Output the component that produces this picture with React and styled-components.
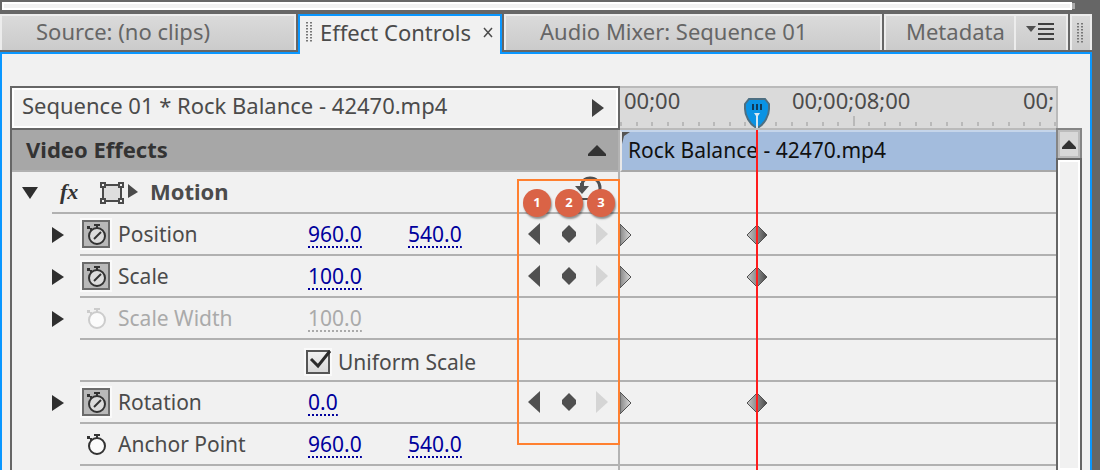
import React from 'react';
import styled, { createGlobalStyle } from 'styled-components';

const GlobalStyle = createGlobalStyle`
  * {
    box-sizing: border-box;
  }
  body {
    margin: 0;
    background: #666;
    color: #4b4b4b;
    font-family: 'Noto Sans', 'Open Sans', sans-serif;
    font-size: 21px;
    overflow: hidden;
  }
  button {
    padding: 0;
    border: none;
    background: none;
    color: inherit;
    font: inherit;
    cursor: pointer;
  }
  svg {
    display: block;
    flex: none;
  }
`;

const Workspace = styled.main`
  display: flex;
  flex-direction: column;
  min-height: 100vh;
  padding-right: 8px;
`;

const UpperPanel = styled.div`
  height: 8px;
  margin: 2px 20px 4px 2px;
  border: 2px solid #fff;
  background: #f1f1f1;
  box-shadow: 4px 0 0 -1px #aaa;
`;

const TabBar = styled.nav`
  display: grid;
  grid-template-columns: 298fr 204fr 382fr 186fr 22fr;
  height: 38px;
  font-size: 22px;
`;

const Tab = styled.button`
  display: flex;
  align-items: center;
  height: 36px;
  margin-right: ${(p) => (p.$joined ? 0 : 2)}px;
  margin-left: ${(p) => (p.$gap ? 2 : 0)}px;
  padding: 0 0 4px ${(p) => p.$indent}px;
  border: 2px solid #ececec;
  border-bottom: none;
  background: linear-gradient(#dadada, #cbcbcb);
  color: #666;
  text-align: left;
  white-space: nowrap;
`;

const MenuButton = styled(Tab)`
  border-left: none;
`;

const ActiveTab = styled.div`
  display: flex;
  align-items: center;
  height: 40px;
  padding: 0 6px 6px;
  border: 2px solid #0a97ff;
  border-bottom: none;
  background: #f1f1f1;
  position: relative;
  z-index: 1;
  white-space: nowrap;

  button:first-of-type {
    margin: 0 12px 0 6px;
  }
`;

const TabGroup = styled.div`
  display: grid;
  grid-template-columns: 1fr 54px;
`;

const Grip = styled.div`
  display: flex;
  align-items: center;
  justify-content: center;
  height: 36px;
  border: 2px solid #ececec;
  border-bottom: none;
  background: linear-gradient(#dadada, #cbcbcb);
`;

const Panel = styled.section`
  display: grid;
  grid-template-columns: 610px 1fr 24px;
  flex: 1;
  padding: 32px 8px 0;
  border: 2px solid #0a97ff;
  border-bottom: none;
  background: #f1f1f1;
`;

const Properties = styled.div`
  position: relative;
`;

const ClipHeader = styled.header`
  display: flex;
  justify-content: space-between;
  align-items: center;
  height: 44px;
  padding: 0 14px 0 10px;
  border: 2px solid #666;
  box-shadow: inset 0 0 0 2px #fff;
  font-size: 22px;

  span {
    padding-bottom: 6px;
  }
`;

const PropertyList = styled.div`
  height: calc(100% - 44px);
  border-left: 2px solid #666;
  border-right: 2px solid #b3b3b3;
`;

const GroupBar = styled.div`
  display: flex;
  justify-content: space-between;
  align-items: center;
  height: 42px;
  padding: 0 12px 0 14px;
  border-bottom: 2px solid #b1b1b1;
  background: #a7a7a7;
  color: #333;
  font-size: 22px;
  font-weight: bold;

  span {
    padding-bottom: 2px;
  }
`;

const Row = styled.div`
  display: grid;
  grid-template-columns: ${(p) => (p.$effect ? 40 : 68)}px 1fr;
  height: 42px;
  color: ${(p) => (p.$disabled ? '#aaa' : '#4b4b4b')};
`;

const ToggleCell = styled.div`
  display: flex;
  align-items: center;
  padding-left: ${(p) => (p.$effect ? 10 : 40)}px;
`;

const EffectCells = styled.div`
  display: flex;
  align-items: center;
  gap: 12px;
  padding: 0 16px 0 8px;
  border-bottom: 2px solid #b1b1b1;
  font-size: 22px;
  font-weight: bold;

  > span {
    padding-bottom: 2px;
  }
  > button:last-child {
    align-self: flex-start;
    margin: 4px 0 0 auto;
  }
`;

const FxButton = styled.button`
  width: 28px;
  color: #333;
  font-family: 'Liberation Serif', serif;
  font-style: italic;
  font-size: 22px;
  line-height: 36px;
  text-align: left;
`;

const ParamCells = styled.div`
  display: grid;
  grid-template-columns: 38px 190px 100px 120px 1fr;
  align-items: center;
  border-bottom: 2px solid #b1b1b1;
  white-space: nowrap;
`;

const WatchButton = styled.button`
  width: 28px;
  height: 28px;
  margin-left: 2px;
  border: 2px solid ${(p) => (p.$on ? '#6b6b6b' : 'transparent')};
  background: ${(p) => (p.$on ? '#b9b9b9' : 'none')};
  box-shadow: ${(p) => (p.$on ? '0 0 0 2px #fafafa' : 'none')};
  color: ${(p) => (p.disabled ? '#ccc' : '#333')};
`;

const Value = styled.button`
  justify-self: start;
  height: 28px;
  color: ${(p) => (p.disabled ? '#aaa' : '#00009c')};
  line-height: 28px;
  background: repeating-linear-gradient(90deg, currentColor 0 2px, transparent 2px 4px) bottom / 100% 2px no-repeat;
`;

const KeyNav = styled.div`
  display: grid;
  grid-template-columns: repeat(3, 34px);
`;

const CheckLabel = styled.label`
  display: flex;
  align-items: center;
  grid-column: 2 / -1;
  gap: 8px;
  padding: 4px 0 0 188px;

  input {
    appearance: none;
    width: 24px;
    height: 24px;
    margin: 0;
    border: 2px solid #555;
    background: linear-gradient(#f1f1f1, #d8d8d8);
    box-shadow: 0 0 0 2px #fafafa;
  }
`;

const CheckBox = styled.span`
  position: relative;

  input {
    display: block;
  }
  svg {
    position: absolute;
    inset: 0;
    pointer-events: none;
  }
  input:not(:checked) + svg {
    display: none;
  }
`;

const Highlight = styled.div`
  position: absolute;
  top: 93px;
  right: 0;
  width: 103px;
  height: 266px;
  padding: 8px 0 0 4px;
  border: 2px solid #ff8030;
  display: flex;
  gap: 4px;
  pointer-events: none;
`;

const Badge = styled.span`
  flex: none;
  width: 28px;
  height: 28px;
  border-radius: 50%;
  background: #da6346;
  box-shadow: 1px 2px 2px rgba(0, 0, 0, 0.4);
  color: #fff;
  font: bold 13px/26px 'Open Sans', sans-serif;
  text-align: center;
`;

const Timeline = styled.div`
  position: relative;
  min-width: 0;
  overflow: hidden;
`;

const Ruler = styled.div`
  height: 44px;
  border: 2px solid #bababa;
  border-left: none;
  background: #dadada;
  overflow: hidden;
`;

const RulerTimes = styled.div`
  display: grid;
  grid-template-columns: 168px 231px 1fr;
  padding-left: 4px;
  font-size: 22px;
  line-height: 24px;
  white-space: nowrap;
`;

const ClipBar = styled.div`
  display: flex;
  height: 42px;
  margin-right: 2px;
  border-top: 2px solid #c5d5ea;
  border-bottom: 2px solid #a8a8a8;
  border-left: 2px solid #e8e8e8;
  background: #a3bcdd;
  color: #111;
  line-height: 36px;
  white-space: nowrap;

  span {
    margin-left: -2px;
  }
`;

const Track = styled.div`
  position: relative;
  height: 42px;
  margin-right: 2px;
  border-bottom: 2px solid #b1b1b1;
`;

const Keyframe = styled.button`
  position: absolute;
  top: 10px;
  left: ${(p) => p.$at}px;
`;

const Playhead = styled.div`
  position: absolute;
  top: 12px;
  bottom: 0;
  left: 124px;
  width: 26px;

  &::after {
    content: '';
    position: absolute;
    top: 32px;
    bottom: 0;
    left: 12px;
    width: 2px;
    background: #ff1c1c;
  }
`;

const Scrollbar = styled.div`
  display: flex;
  flex-direction: column;
  margin: 42px 0 0 -2px;
  position: relative;

  button:first-child {
    display: flex;
    align-items: center;
    justify-content: center;
    height: 30px;
    border: 2px solid #858585;
    border-bottom: none;
    background: #d8d8d8;
    box-shadow: inset 0 0 0 2px #bcbcbc;
  }
  button:last-child {
    flex: 1;
    border: 2px solid #666;
    border-bottom: none;
    box-shadow: inset 0 0 0 2px #fff;
  }
`;

const PARAMS = [
  { name: 'Position', values: ['960.0', '540.0'], open: true, keyed: true },
  { name: 'Scale', values: ['100.0'], open: true, keyed: true },
  { name: 'Scale Width', values: ['100.0'], open: true, disabled: true },
  { name: 'Uniform Scale', check: true },
  { name: 'Rotation', values: ['0.0'], open: true, keyed: true },
  { name: 'Anchor Point', values: ['960.0', '540.0'] },
];

const TICKS = Array.from({ length: 29 }, (_, i) => Math.round(i * 15.5));

const GripDots = () => (
  <svg width="8" height="20" fill="#777">
    {[0, 3, 6, 9, 12, 15, 18].map((y) => (
      <g key={y}>
        <rect x="0" y={y} width="2" height="1.5" />
        <rect x="4" y={y} width="2" height="1.5" />
      </g>
    ))}
  </svg>
);

const RightArrow = ({ height = 16, color = '#2f2f2f' }) => (
  <svg width="12" height={height} viewBox="0 0 12 16" preserveAspectRatio="none">
    <path d="M0 0 12 8 0 16Z" fill={color} />
  </svg>
);

const UpArrow = ({ width = 18, height = 11 }) => (
  <svg width={width} height={height} viewBox="0 0 18 11" preserveAspectRatio="none">
    <path d="M9 0 18 9V11H0V9Z" fill="#333" />
  </svg>
);

const Stopwatch = ({ on }) => (
  <svg width="24" height="24" viewBox="0 0 24 24" fill="none" stroke="currentColor" strokeWidth="2">
    <circle cx="13" cy="14" r="8" fill="#fff" fillOpacity={on ? 0.5 : 0.7} />
    <path d="M10 3H16M13 3V6" />
    <path d="M3 4H6V6H8V9H6V7H3Z" fill="currentColor" stroke="none" />
    {on && <path d="M10 17 17 10" />}
  </svg>
);

const TransformIcon = () => (
  <svg width="38" height="24" viewBox="0 0 38 24" fill="#f1f1f1" stroke="#4b4b4b" strokeWidth="2">
    <rect x="3" y="5" width="18" height="16" fill="#dedede" />
    <rect x="1" y="3" width="4" height="4" />
    <rect x="19" y="3" width="4" height="4" />
    <rect x="1" y="19" width="4" height="4" />
    <rect x="19" y="19" width="4" height="4" />
    <path d="M28 4V18L38 12Z" fill="#4b4b4b" stroke="none" />
  </svg>
);

const ResetIcon = () => (
  <svg width="28" height="26" viewBox="0 0 28 26" fill="none" stroke="#505050" strokeWidth="3">
    <path d="M8 8C9 4 12 2 16 2C22 2 26 6 26 12C26 18 23 22 18 23" />
    <path d="M6 7H10V10H15L8 18 1 10H6Z" fill="#505050" stroke="none" />
    <path d="M7 23H20" strokeWidth="2" />
  </svg>
);

const KeyNavigator = () => (
  <KeyNav>
    <button aria-label="Previous keyframe">
      <svg width="12" height="22">
        <path d="M12 0V22L0 11Z" fill="#505050" />
      </svg>
    </button>
    <button aria-label="Add or remove keyframe">
      <svg width="14" height="22">
        <path d="M7 2 14 9V13L7 20 0 13V9Z" fill="#505050" />
      </svg>
    </button>
    <button aria-label="Next keyframe">
      <RightArrow height={22} color="#d5d5d5" />
    </button>
  </KeyNav>
);

const Param = ({ name, values, open, keyed, disabled, check }) => (
  <Row $disabled={disabled}>
    <ToggleCell>
      {open && (
        <button aria-label={`Expand ${name}`}>
          <RightArrow />
        </button>
      )}
    </ToggleCell>
    <ParamCells>
      {check ? (
        <CheckLabel>
          <CheckBox>
            <input type="checkbox" defaultChecked />
            <svg width="26" height="24" fill="none" stroke="#2b2b2b" strokeWidth="3">
              <path d="M5 9 12 16 24 1" />
            </svg>
          </CheckBox>
          {name}
        </CheckLabel>
      ) : (
        <>
          <WatchButton $on={keyed} disabled={disabled} aria-label={`Toggle ${name} animation`}>
            <Stopwatch on={keyed} />
          </WatchButton>
          <span>{name}</span>
          <Value disabled={disabled}>{values[0]}</Value>
          {values[1] ? <Value>{values[1]}</Value> : <span />}
          {keyed && <KeyNavigator />}
        </>
      )}
    </ParamCells>
  </Row>
);

const App = () => {
  return (
    <>
      <GlobalStyle />
      <Workspace>
        <UpperPanel />
        <TabBar>
          <Tab $indent={34}>Source: (no clips)</Tab>
          <ActiveTab>
            <GripDots />
            <button>Effect Controls</button>
            <button aria-label="Close tab">
              <svg width="10" height="12" stroke="#4b4b4b" strokeWidth="1.5">
                <path d="M1 2 9 11M9 2 1 11" />
              </svg>
            </button>
          </ActiveTab>
          <Tab $indent={34} $gap>
            Audio Mixer: Sequence 01
          </Tab>
          <TabGroup>
            <Tab $indent={20} $joined>
              Metadata
            </Tab>
            <MenuButton $indent={10} aria-label="Panel menu">
              <svg width="30" height="18">
                <path d="M0 4H10L5 10Z" fill="#505050" />
                <path d="M12 2H28M12 7H28M12 12H28M12 17H28" stroke="#404040" strokeWidth="2" />
              </svg>
            </MenuButton>
          </TabGroup>
          <Grip>
            <GripDots />
          </Grip>
        </TabBar>

        <Panel>
          <Properties>
            <ClipHeader>
              <span>Sequence 01 * Rock Balance - 42470.mp4</span>
              <button aria-label="Show timeline view">
                <RightArrow height={18} color="#404040" />
              </button>
            </ClipHeader>
            <PropertyList>
              <GroupBar>
                <span>Video Effects</span>
                <button aria-label="Collapse video effects">
                  <UpArrow />
                </button>
              </GroupBar>
              <Row $effect>
                <ToggleCell $effect>
                  <button aria-label="Collapse Motion">
                    <svg width="16" height="12">
                      <path d="M0 0H16L8 12Z" fill="#2f2f2f" />
                    </svg>
                  </button>
                </ToggleCell>
                <EffectCells>
                  <FxButton>fx</FxButton>
                  <TransformIcon />
                  <span>Motion</span>
                  <button aria-label="Reset Motion">
                    <ResetIcon />
                  </button>
                </EffectCells>
              </Row>
              {PARAMS.map((param) => (
                <Param key={param.name} {...param} />
              ))}
            </PropertyList>
            <Highlight>
              <Badge>1</Badge>
              <Badge>2</Badge>
              <Badge>3</Badge>
            </Highlight>
          </Properties>

          <Timeline>
            <Ruler>
              <RulerTimes>
                <span>00;00</span>
                <span>00;00;08;00</span>
                <span>00;</span>
              </RulerTimes>
              <svg width="100%" height="16" fill="#b9b9b9">
                {TICKS.map((x, i) => (
                  <rect key={x} x={x} y={i === 15 ? 4 : 10} width="2" height={i === 15 ? 10 : 4} />
                ))}
              </svg>
            </Ruler>
            <ClipBar>
              <svg width="8" height="12">
                <path d="M0 0H8L2 4 0 12Z" fill="#555" />
              </svg>
              <span>Rock Balance - 42470.mp4</span>
            </ClipBar>
            <Track />
            {PARAMS.map(({ name, keyed }) => (
              <Track key={name}>
                {keyed && (
                  <>
                    <Keyframe $at={0} aria-label={`${name} start keyframe`}>
                      <svg width="12" height="22">
                        <path d="M0 0 11 11 0 22Z" fill="url(#key-start)" stroke="#505050" />
                      </svg>
                    </Keyframe>
                    <Keyframe $at={126} aria-label={`${name} keyframe`}>
                      <svg width="22" height="22">
                        <path d="M11 1 21 11 11 21 1 11Z" fill="url(#key-end)" stroke="#505050" />
                      </svg>
                    </Keyframe>
                  </>
                )}
              </Track>
            ))}
            <Playhead>
              <svg width="26" height="32">
                <defs>
                  <linearGradient id="key-start">
                    <stop offset="0" stopColor="#888" />
                    <stop offset="1" stopColor="#ddd" />
                  </linearGradient>
                  <linearGradient id="key-end">
                    <stop offset="0" stopColor="#c8c8c8" />
                    <stop offset="1" stopColor="#484848" />
                  </linearGradient>
                </defs>
                <path
                  d="M5 1H21L25 6V11C25 18 20 26 15 29H11C6 26 1 18 1 11V6Z"
                  fill="#0a93e4"
                  stroke="#4d6f82"
                  strokeWidth="2"
                />
                <path d="M9 6V12M13 6V12M17 6V12" stroke="#103a58" strokeWidth="2" />
                <path d="M10 15H16L14 18V30H12V18Z" fill="#d8e8f2" />
              </svg>
            </Playhead>
          </Timeline>

          <Scrollbar>
            <button aria-label="Scroll up">
              <UpArrow width={14} height={9} />
            </button>
            <button aria-label="Scroll thumb" />
          </Scrollbar>
        </Panel>
      </Workspace>
    </>
  );
};

export default App;
